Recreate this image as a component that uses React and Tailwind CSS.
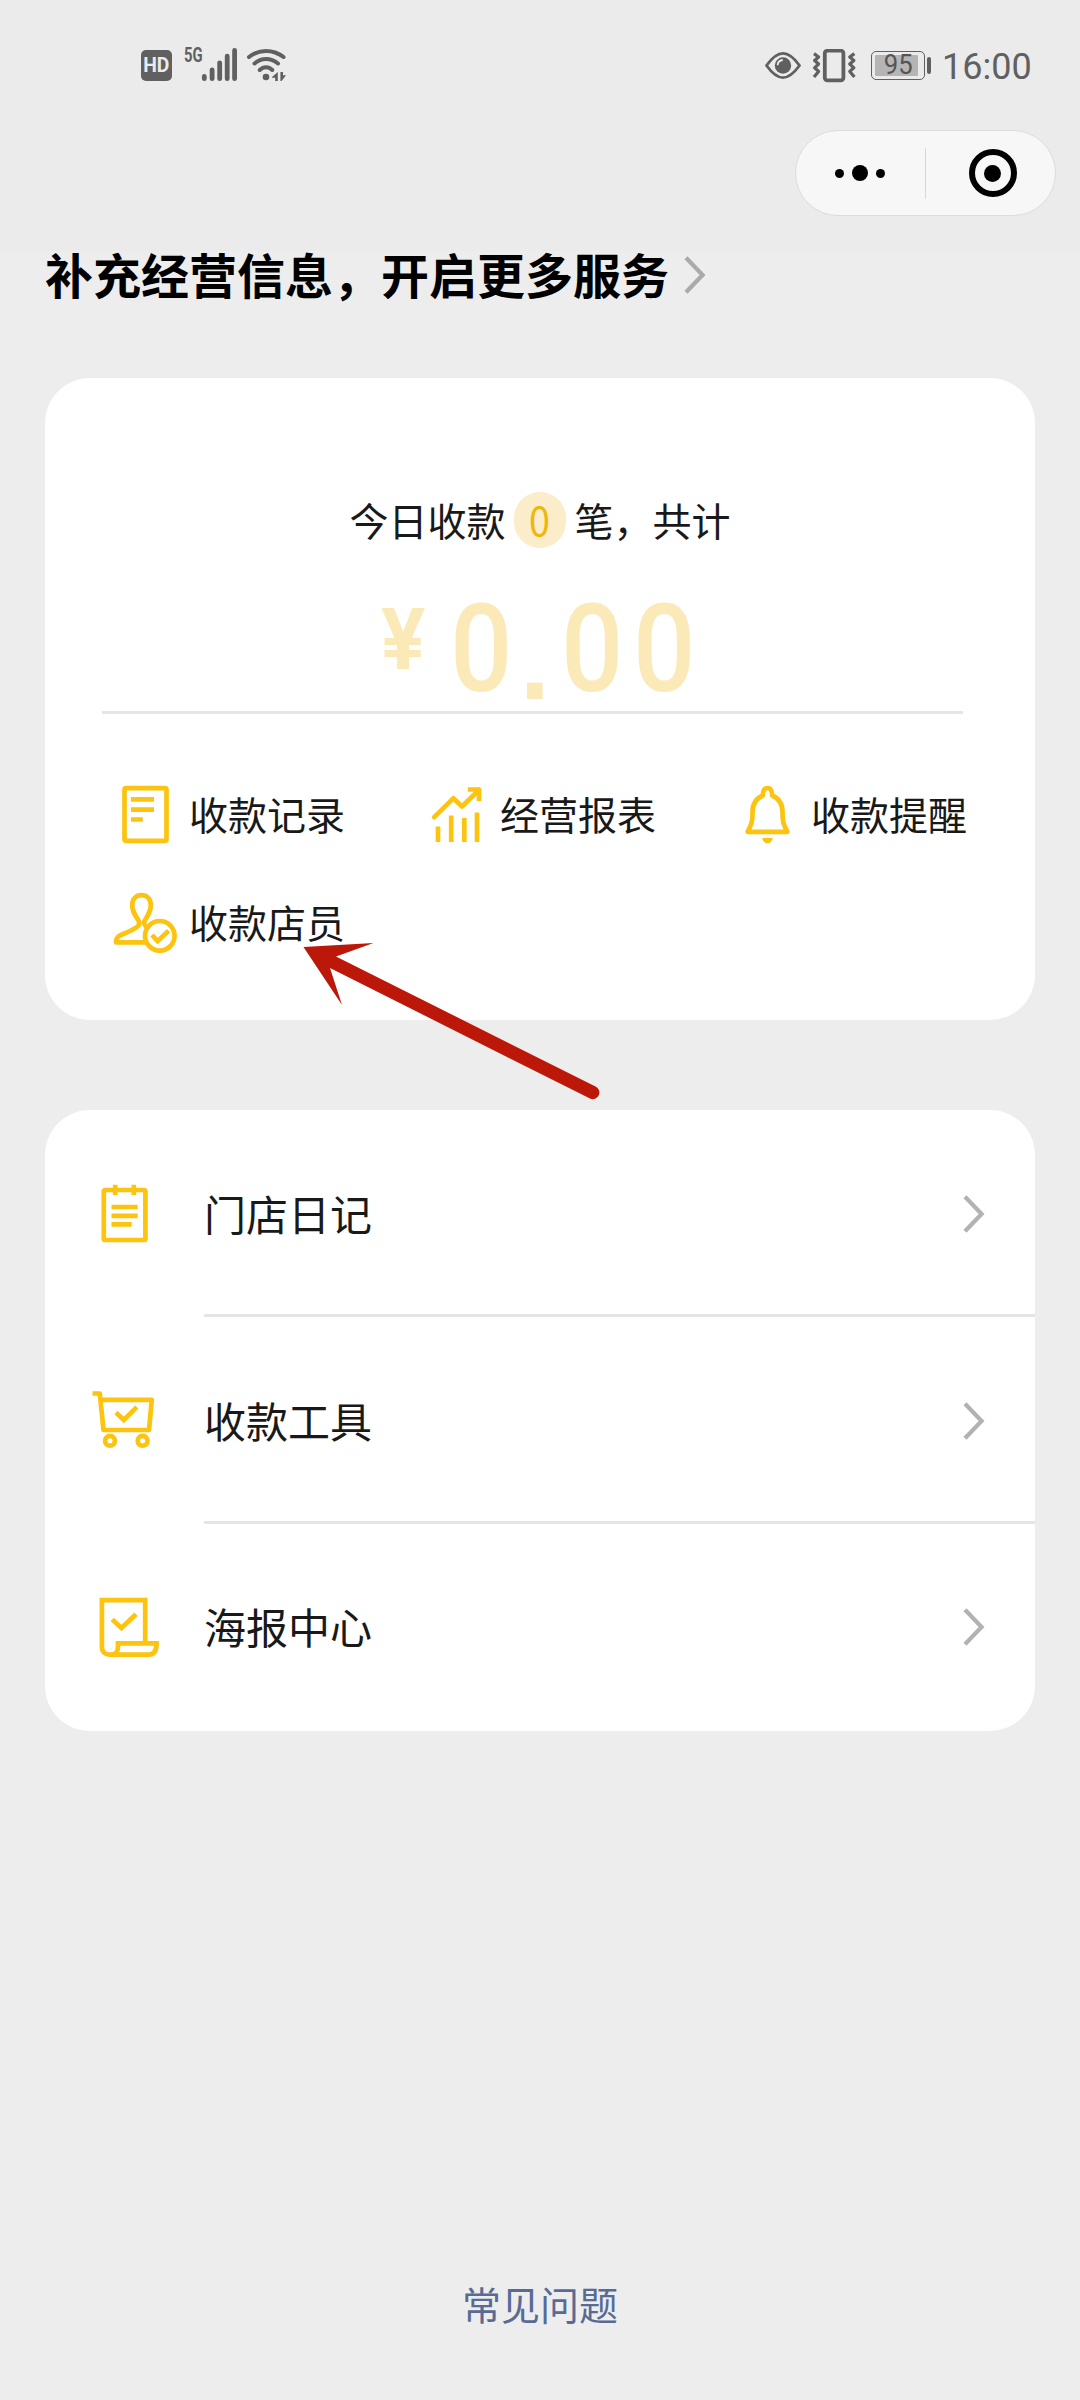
const GOLD = '#fcc30f';
const GRAY = '#606060';

/* ---------- status bar ---------- */

function SignalBars() {
  return (
    <svg className="block h-[34px] w-9" viewBox="201 48 36 34" stroke={GRAY} strokeWidth="4.8" strokeLinecap="round">
      <path d="M204.3 76.4V78.7M212.1 69.8V78.7M219.7 62.8V78.7M227.2 56.2V78.7M234.6 50.4V78.7" />
    </svg>
  );
}

function WifiIcon() {
  return (
    <svg className="block h-[34px] w-10" viewBox="246 48 40 34" fill="none" stroke={GRAY} strokeWidth="4" strokeLinecap="round">
      <path d="M249 57C259 49 273 49 283.5 57" />
      <path d="M254.5 63.5C261.5 57.6 270.5 57.6 278 63.5" />
      <path d="M259.7 70C263.6 66.2 268.6 66.2 272.3 70" />
      <circle cx="266" cy="77" r="3.3" fill={GRAY} stroke="none" />
      <path d="M272 77L277.8 72V81H275.2V77.8H272ZM280.4 72H283V75.2H286L281.6 81H280.4Z" fill={GRAY} stroke="none" />
    </svg>
  );
}

function EyeIcon() {
  return (
    <svg className="block h-8 w-9" viewBox="765 50 36 32" fill="none" stroke={GRAY} strokeWidth="2.8">
      <path d="M766.5 65.5C773 56.5 778 53.4 783 53.4C788 53.4 793 56.5 799.5 65.5C793 74.5 788 77.6 783 77.6C778 77.6 773 74.5 766.5 65.5Z" strokeLinejoin="round" />
      <circle cx="783" cy="65.5" r="8.2" fill={GRAY} stroke="none" />
      <path d="M777.6 65.2C777.8 62.2 779.8 60.2 782.8 60" stroke="#ebebeb" strokeWidth="1.8" />
    </svg>
  );
}

function VibrateIcon() {
  return (
    <svg className="block h-[34px] w-11" viewBox="812 49 44 34" fill="none" stroke={GRAY} strokeWidth="3.2">
      <rect x="824.8" y="50.7" width="18.6" height="29.6" rx="2.6" strokeWidth="3.8" />
      <path d="M814 53.6L818.6 57L814.6 60.5L818.6 64L814.6 67.8L818.6 71.4L814 77" strokeLinejoin="round" />
      <path d="M854.4 53.6L849.8 57L853.8 60.5L849.8 64L853.8 67.8L849.8 71.4L854.4 77" strokeLinejoin="round" />
    </svg>
  );
}

function Battery() {
  return (
    <div className="flex items-center gap-[2px]">
      <div className="flex h-[29px] w-[54px] rounded-[5px] border-[1.5px] border-[#606060] p-[3px]">
        <div className="flex flex-1 items-center justify-center rounded-[1px] bg-[#b5b5b5] pl-[3px] text-[27px] leading-none text-[#555555]">
          <span className="scale-x-[0.95]">95</span>
        </div>
        <div className="w-[3px]" />
      </div>
      <div className="h-[17px] w-[4px] rounded-full bg-[#606060]" />
    </div>
  );
}

function StatusBar() {
  return (
    <div className="flex h-[130px] items-start pl-[141px] pr-[49px] font-['Roboto',sans-serif]">
      <div className="mt-[50px] flex h-[31px] w-[31px] items-center justify-center rounded-[5px] bg-[#606060] text-[21px] font-bold leading-none text-[#ebebeb]">
        <span className="scale-x-[0.92]">HD</span>
      </div>
      <div className="ml-[12px] mt-[45px] w-[17px] text-[20px] font-bold leading-[21px] text-[#606060]">
        <span className="inline-block origin-left scale-x-[0.74]">5G</span>
      </div>
      <div className="mt-[48px]"><SignalBars /></div>
      <div className="ml-[9px] mt-[48px]"><WifiIcon /></div>
      <div className="ml-auto mt-[50px]"><EyeIcon /></div>
      <div className="ml-[11px] mt-[49px]"><VibrateIcon /></div>
      <div className="ml-[15px] mt-[51px]"><Battery /></div>
      <div className="ml-[11px] mt-[46px] w-[89px] whitespace-nowrap text-[36px] leading-[42px] text-[#606060]">16:00</div>
    </div>
  );
}

function Capsule() {
  return (
    <div className="ml-auto mr-[24px] flex h-[86px] w-[261px] items-center rounded-full border border-[#dcdcdc] bg-[#f7f7f7]">
      <div className="flex w-[129px] items-center justify-center gap-[8px] pr-[2px]">
        <span className="h-[9px] w-[9px] rounded-full bg-black" />
        <span className="h-[16px] w-[16px] rounded-full bg-black" />
        <span className="h-[9px] w-[9px] rounded-full bg-black" />
      </div>
      <div className="h-[51px] w-px bg-[#d8d8d8]" />
      <div className="flex flex-1 justify-center pl-[4px]">
        <div className="flex h-[48px] w-[48px] items-center justify-center rounded-full border-[6px] border-black">
          <span className="h-[17px] w-[17px] rounded-full bg-black" />
        </div>
      </div>
    </div>
  );
}

/* ---------- gold icons ---------- */

function Icon({ viewBox, children }) {
  return (
    <svg className="block h-[72px] w-[72px]" viewBox={viewBox} fill="none" stroke={GOLD} strokeWidth="4.7" strokeLinejoin="round">
      {children}
    </svg>
  );
}

function RecordIcon() {
  return (
    <Icon viewBox="109 778 72 72">
      <rect x="124.5" y="788.2" width="42" height="52.6" rx="1.5" />
      <path d="M131 799.4H154M131 809.6H154M131 819.5H142.8" />
    </Icon>
  );
}

function ChartIcon() {
  return (
    <Icon viewBox="420 778 72 72">
      <path d="M434.2 817.2L453.3 798.3L462 806.5L479 790" strokeLinecap="round" />
      <path d="M467.8 789.5H479V801" />
      <path d="M438 826.5V842M451.2 815.5V842M464.3 818V842M477 812.5V842" />
    </Icon>
  );
}

function BellIcon() {
  return (
    <Icon viewBox="731 778 72 72">
      <path d="M747.6 831.8C751 825.5 752.5 823 752.5 812C752.5 803 756 798.5 762.8 795.5C763 790.5 764.8 788 767.5 788C770.2 788 772 790.5 772.2 795.5C779 798.5 782.5 803 782.5 812C782.5 823 784 825.5 787.4 831.8Z" />
      <path d="M762.2 838H772.8C772 841.6 770 843.2 767.5 843.2C765 843.2 763 841.6 762.2 838Z" fill={GOLD} stroke="none" />
    </Icon>
  );
}

function ClerkIcon() {
  return (
    <Icon viewBox="109 887 72 72">
      <path d="M146 943.3H116C116 936 122 936 131 931.5C138.5 927.5 140.5 926 138.5 921.5C134 914.5 132.2 911.5 132.2 906.5C132.2 900 136 896.2 141.5 896.2C147 896.2 150.8 900 150.8 906.5C150.8 911.5 149 914.5 144.8 921.5C143.4 924 144 925 146.5 928" />
      <circle cx="159.8" cy="936.8" r="14.8" />
      <path d="M152 936L157.6 942.2L168.6 931.8" strokeLinejoin="miter" />
    </Icon>
  );
}

function DiaryIcon() {
  return (
    <Icon viewBox="88 1177 72 72">
      <rect x="103.8" y="1190" width="41.6" height="50" rx="1.5" />
      <path d="M115.2 1184.8V1195M133.8 1184.8V1195" />
      <path d="M111.5 1207H137.6M111.5 1215.8H137.6M111.5 1224.4H131.6" />
    </Icon>
  );
}

function CartIcon() {
  return (
    <Icon viewBox="88 1384 72 72">
      <path d="M92.5 1393.5H99.8L103.5 1430H149L151.8 1399.8H100.5" />
      <path d="M116 1412.5L123.8 1420L136.8 1407.2" strokeLinejoin="miter" />
      <circle cx="110" cy="1440.8" r="4.9" />
      <circle cx="142.6" cy="1440.8" r="4.9" />
    </Icon>
  );
}

function PosterIcon() {
  return (
    <Icon viewBox="88 1591 72 72">
      <path d="M145.2 1642.5V1600.2H101.9V1646.5C101.9 1652 105 1654.6 109.5 1654.6H148.5C154 1654.6 156.6 1650.5 156.6 1643.4H118V1647C118 1651.5 115.5 1654.6 111 1654.6" strokeLinejoin="miter" />
      <path d="M112.2 1619.4L121.4 1628L136 1614.2" strokeLinejoin="miter" />
    </Icon>
  );
}

function Chevron({ color = '#b2b2b2' }) {
  return (
    <svg className="block h-10 w-6" viewBox="0 0 24 40" fill="none" stroke={color} strokeWidth="4.2">
      <path d="M3 2.8L19.6 20L3 37.2" />
    </svg>
  );
}

/* ---------- content ---------- */

const actions = [
  { label: '收款记录', icon: RecordIcon },
  { label: '经营报表', icon: ChartIcon },
  { label: '收款提醒', icon: BellIcon },
  { label: '收款店员', icon: ClerkIcon },
];

const links = [
  { label: '门店日记', icon: DiaryIcon },
  { label: '收款工具', icon: CartIcon },
  { label: '海报中心', icon: PosterIcon },
];

function Digit() {
  return (
    <span className="w-[72px] text-[122px] font-medium">
      <span className="inline-block origin-left scale-x-[0.9]">0</span>
    </span>
  );
}

function SummaryCard() {
  return (
    <section className="mx-[45px] mt-[78px] h-[642px] rounded-[45px] bg-white">
      <div className="flex h-[333px] flex-col items-center pt-[114px]">
        <div className="flex h-[56px] items-center text-[39px] leading-none">
          <span className="-translate-y-px">今日收款</span>
          <span className="ml-[8px] mr-[9px] flex h-[56px] w-[52px] items-center justify-center rounded-full bg-[#fbedc9] text-[41px] text-[#edb70e]">
            <span className="-translate-y-[2px] scale-x-[0.92]">0</span>
          </span>
          <span className="-translate-y-px">笔，共计</span>
        </div>
        <div className="mt-[41px] flex h-[120px] items-start pl-[5px] font-['Roboto',sans-serif] font-bold leading-none text-[#fbeab8]">
          <span className="mt-[8px] w-[46px] text-[86px]">
            <span className="inline-block origin-left scale-x-[0.96]">¥</span>
          </span>
          <span className="w-[23px]" />
          <Digit />
          <span className="mt-[17px] w-[39px] -translate-x-[2px] font-['Liberation_Sans',sans-serif] text-[110px]">.</span>
          <Digit />
          <Digit />
        </div>
      </div>
      <div className="ml-[57px] h-[3px] w-[861px] bg-[#e5e5e5]" />
      <div className="grid grid-cols-[311px_311px_311px] gap-y-[36px] pl-[64px] pt-[64px]">
        {actions.map(({ label, icon: ActionIcon }) => (
          <div key={label} className="flex h-[72px] items-center gap-[8px] whitespace-nowrap text-[39px] leading-none">
            <ActionIcon />
            <span className="pb-[2px]">{label}</span>
          </div>
        ))}
      </div>
    </section>
  );
}

function LinksCard() {
  return (
    <section className="mx-[45px] mt-[90px] overflow-hidden rounded-[45px] bg-white">
      {links.map(({ label, icon: LinkIcon }, i) => (
        <div key={label} className="flex h-[207px] items-stretch pl-[43px]">
          <div className="flex w-[116px] items-center pb-[1px]">
            <LinkIcon />
          </div>
          <div
            className={
              i < links.length - 1
                ? 'flex flex-1 items-center justify-between border-b-[3px] border-[#e5e5e5] pr-[49px] pt-[3px]'
                : 'flex flex-1 items-center justify-between pb-[1px] pr-[49px]'
            }
          >
            <span className="pb-[2px] text-[42px] leading-none">{label}</span>
            <Chevron />
          </div>
        </div>
      ))}
    </section>
  );
}

function PointerArrow() {
  return (
    <svg className="pointer-events-none absolute left-[300px] top-[936px] h-[170px] w-[305px]" viewBox="300 936 305 170" fill="#bc180a">
      <path d="M303.5 947L373.5 943L336 956.5L595.5 1086.5A6.6 6.6 0 0 1 590 1098.6L330 968L342 1005Z" />
    </svg>
  );
}

export default function App() {
  return (
    <div className="relative flex h-[2400px] w-[1080px] flex-col bg-[#ededed] font-['Noto_Sans_CJK_SC',sans-serif] text-[#191919]">
      <header className="h-[251px] bg-[#ebebeb]">
        <StatusBar />
        <Capsule />
      </header>
      <div className="flex h-[49px] items-center pl-[45px] text-black">
        <h1 className="pb-[6px] text-[48px] font-bold leading-none">补充经营信息，开启更多服务</h1>
        <div className="ml-[14px] pb-[2px]">
          <Chevron color="#aaaaaa" />
        </div>
      </div>
      <SummaryCard />
      <LinksCard />
      <footer className="mt-auto pb-[77px] text-center text-[39px] leading-[40px] text-[#576b95]">常见问题</footer>
      <PointerArrow />
    </div>
  );
}
